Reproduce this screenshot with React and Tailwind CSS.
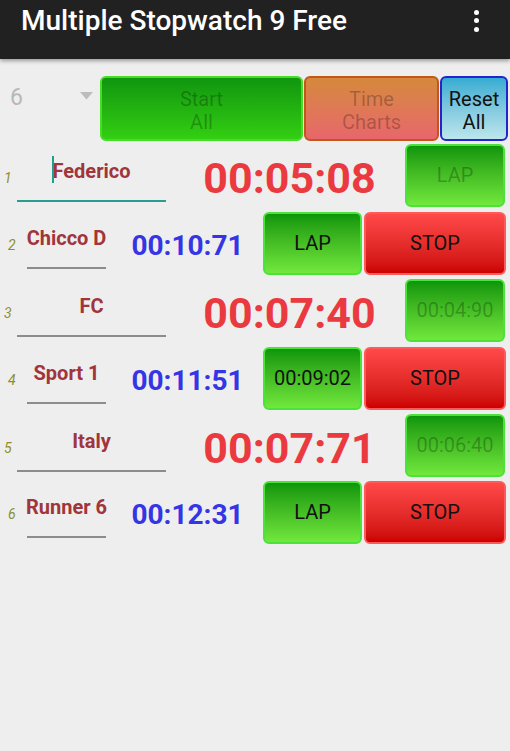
import React from "react";

const rows = [
  { n: 1, name: "Federico", running: false, time: "00:05:08", btn: "LAP", focused: true, h: "h-[68px]" },
  { n: 2, name: "Chicco D", running: true, time: "00:10:71", lap: "LAP", h: "h-[67px]" },
  { n: 3, name: "FC", running: false, time: "00:07:40", btn: "00:04:90", h: "h-[68px]" },
  { n: 4, name: "Sport 1", running: true, time: "00:11:51", lap: "00:09:02", h: "h-[67px]" },
  { n: 5, name: "Italy", running: false, time: "00:07:71", btn: "00:06:40", h: "h-[67px]" },
  { n: 6, name: "Runner 6", running: true, time: "00:12:31", lap: "LAP", h: "h-[67px]" },
];

const greenBtn =
  "flex items-center justify-center rounded-[6px] border-2 border-[#4be33a] bg-linear-to-b from-[#0b960b] to-[#70e83c] text-[20px] leading-[23px]";
const redBtn =
  "flex items-center justify-center rounded-[6px] border-2 border-[#ff5a5a] bg-linear-to-b from-[#ff4848] to-[#cc0000] text-[20px] leading-[23px] text-[#111]";

function Row({ r }) {
  if (!r.running) {
    return (
      <div className={`flex items-start ${r.h}`}>
        <div className="w-[17px] self-center pl-[4px] pt-[1px] text-[14px] italic text-[#8e8e2e]">{r.n}</div>
        <div className="flex h-[58px] w-[149px] flex-col">
          <div className="relative flex items-center justify-center pt-[16px] text-[20px] font-bold leading-[22px] whitespace-nowrap text-[#a0353b]">
            {r.focused && <span className="absolute left-[35px] top-[12px] block h-[27px] w-[2px] bg-[#1fa08e]" />}
            <span>{r.name}</span>
          </div>
          <div className="flex-1" />
          <div className={r.focused ? "h-[2px] bg-[#2a9d92]" : "h-[2px] bg-[#8c8c8c]"} />
        </div>
        <div className="ml-[8px] w-[231px] self-center text-center text-[43px] font-bold leading-[50px] text-[#ea3a40]">
          {r.time}
        </div>
        <div className={`${greenBtn} h-[63px] w-[100px] text-black/25`}>{r.btn}</div>
      </div>
    );
  }
  return (
    <div className={`flex items-start ${r.h}`}>
      <div className="w-[27px] self-center pl-[8px] text-[14px] italic text-[#8e8e2e]">{r.n}</div>
      <div className="flex h-[57px] w-[79px] flex-col">
        <div className="flex justify-center pt-[15px] text-[20px] font-bold leading-[22px] whitespace-nowrap text-[#a0353b]">
          {r.name}
        </div>
        <div className="flex-1" />
        <div className="h-[2px] bg-[#8c8c8c]" />
      </div>
      <div className="ml-[6px] w-[151px] self-center text-center text-[28px] font-bold leading-[34px] text-[#3535e6]">
        {r.time}
      </div>
      <div className={`${greenBtn} h-[63px] w-[99px] text-[#111]`}>{r.lap}</div>
      <div className={`${redBtn} ml-[2px] h-[63px] w-[142px]`}>STOP</div>
    </div>
  );
}

export default function App() {
  return (
    <div className="min-h-screen w-[510px] bg-[#eeeeee] font-[family-name:Roboto,sans-serif]">
      <div className="relative z-10 flex h-[59px] items-center justify-between bg-[#212121] pl-[21px] pr-[31px] shadow-[0_2px_4px_rgba(0,0,0,0.35)]">
        <div className="-mt-[18px] text-[28px] font-medium leading-[32px] text-white">Multiple Stopwatch 9 Free</div>
        <div className="-mt-[18px] flex flex-col items-center gap-[3.5px]">
          <span className="block h-[5px] w-[5px] rounded-full bg-white" />
          <span className="block h-[5px] w-[5px] rounded-full bg-white" />
          <span className="block h-[5px] w-[5px] rounded-full bg-white" />
        </div>
      </div>

      <div className="mt-[17px] flex h-[65px] items-stretch">
        <div className="flex w-[100px] items-start pl-[10px]">
          <span className="pt-[8px] text-[23px] leading-[28px] text-[#b8b8b8]">6</span>
          <svg className="ml-[57px] mt-[16px]" width="13" height="8" viewBox="0 0 13 8">
            <polygon points="0,0 13,0 6.5,7.5" fill="#bcbcbc" />
          </svg>
        </div>
        <div className="flex w-[203px] flex-col items-center justify-center rounded-[6px] border-2 border-[#45dd25] bg-linear-to-b from-[#0f960f] to-[#33cf12] pt-[4px] text-[20px] leading-[22.5px] text-black/25">
          <span>Start</span>
          <span>All</span>
        </div>
        <div className="ml-[1px] flex w-[135px] flex-col items-center justify-center rounded-[6px] border-2 border-[#c2561c] bg-linear-to-b from-[#d5893a] to-[#e8666a] pt-[4px] text-[20px] leading-[22.5px] text-black/25">
          <span>Time</span>
          <span>Charts</span>
        </div>
        <div className="ml-[1px] flex w-[68px] flex-col items-center justify-center rounded-[6px] border-2 border-[#2424cc] bg-linear-to-b from-[#34acd2] to-[#bce6ec] pt-[4px] text-[20px] leading-[22.5px] text-[#111]">
          <span>Reset</span>
          <span>All</span>
        </div>
      </div>

      <div className="mt-[3px] flex flex-col">
        {rows.map((r) => (
          <Row key={r.n} r={r} />
        ))}
      </div>
    </div>
  );
}
